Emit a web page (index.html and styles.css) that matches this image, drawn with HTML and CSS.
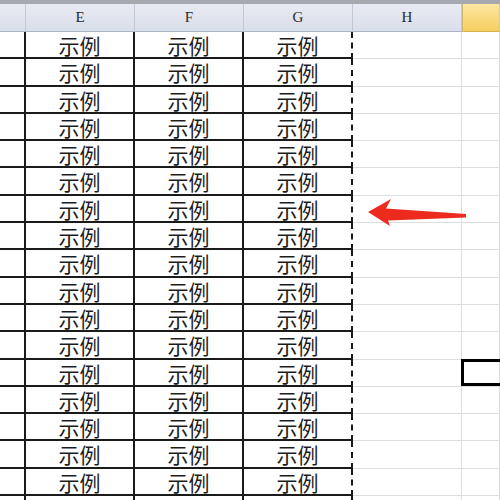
FILE: index.html
```html
<!DOCTYPE html>
<html>
<head>
<meta charset="utf-8">
<link rel="stylesheet" href="styles.css">
</head>
<body>
<div class="page">
  <div class="topbar"></div>
  <div class="sheet" id="sheet">
    <div class="hd hd-d"></div>
    <div class="hd">E</div>
    <div class="hd">F</div>
    <div class="hd">G</div>
    <div class="hd">H</div>
    <div class="hd hd-sel"></div>
  </div>
  <svg class="arrow" width="120" height="40" viewBox="360 196 120 40">
    <polygon points="368,212 391,199 386,208.5 466,214 466,217.5 388,220.5 390,226" fill="#ec2a1e"/>
  </svg>
</div>
<script src="script.js"></script>
</body>
</html>
```
FILE: script.js
```js
var sheet = document.getElementById('sheet');
for (var r = 1; r <= 18; r++) {
  var txt = r <= 17 ? '示例' : '';
  var html = '<div class="c c-d"></div>';
  for (var i = 0; i < 3; i++) {
    html += '<div class="c c-x' + (i === 2 ? ' c-g' : '') + '">' + txt + '</div>';
  }
  html += '<div class="c c-h"></div>';
  html += '<div class="c c-i' + (r === 13 ? ' c-active' : '') + '"></div>';
  sheet.insertAdjacentHTML('beforeend', html);
}
```
FILE: styles.css
```css
html, body {
  margin: 0;
  padding: 0;
  background: #fff;
  overflow: hidden;
}
.page {
  position: relative;
  width: 500px;
  height: 500px;
  overflow: hidden;
}
.topbar {
  height: 4px;
  background: #a7a9b1;
}
.sheet {
  display: grid;
  grid-template-columns: 26px 109px 109px 109px 109px 1fr;
  grid-template-rows: 28px repeat(18, 27.3px);
}
.hd {
  box-sizing: border-box;
  background: linear-gradient(#e9ebf3, #dadeea);
  border-right: 1px solid #c4c8d6;
  border-bottom: 1px solid #a9b4c6;
  font-family: "Liberation Serif", serif;
  font-size: 15px;
  color: #2a2a2a;
  display: flex;
  align-items: center;
  justify-content: center;
}
.hd-sel {
  background: linear-gradient(#fbe6a2, #f6cf5e);
  border-left: 1px solid #c9b67a;
  border-bottom-color: #d7b352;
}
.c {
  box-sizing: border-box;
  border-bottom: 2px solid #1a1a1a;
  border-right: 2px solid #1a1a1a;
  font-family: "Noto Sans CJK SC", "Noto Sans", sans-serif;
  font-size: 21px;
  line-height: 27px;
  color: #1c1c1c;
  text-align: center;
}
.c-g {
  border-right: 2px dashed #1a1a1a;
}
.c-h, .c-i {
  border-bottom: 1px solid #dadde2;
  border-right: 1px solid #dadde2;
}
.c-active {
  position: relative;
}
.c-active::after {
  content: "";
  position: absolute;
  left: -1px;
  top: -1px;
  right: -10px;
  bottom: 0;
  border: 3px solid #000;
}
.arrow {
  position: absolute;
  left: 360px;
  top: 196px;
}
```
